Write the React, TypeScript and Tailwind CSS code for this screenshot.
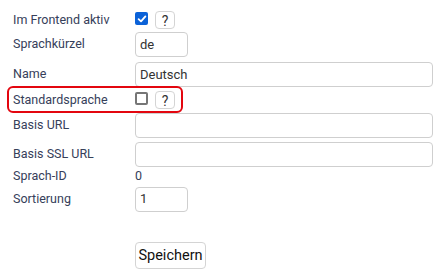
import React from 'react';

const font = { fontFamily: 'Roboto, "Liberation Sans", sans-serif' };

function HelpButton() {
  return (
    <button
      type="button"
      className="ml-[7px] flex h-[18px] w-[20px] items-center justify-center rounded-[4px] border border-[#d4d4d4] bg-white pt-px text-[14px] leading-none text-[#333]"
    >
      ?
    </button>
  );
}

function Checkbox({ checked }: { checked?: boolean }) {
  return checked ? (
    <span className="flex h-[13px] w-[13px] items-center justify-center rounded-[2px] bg-[#0b62d8]">
      <svg width="10" height="10" viewBox="0 0 10 10">
        <path d="M1.6 5.2 L4 7.4 L8.4 2.4" fill="none" stroke="white" strokeWidth="1.8" strokeLinecap="round" strokeLinejoin="round" />
      </svg>
    </span>
  ) : (
    <span className="block h-[13px] w-[13px] rounded-[2px] border-2 border-[#767676] bg-white" />
  );
}

function Input({ value = '', wide }: { value?: string; wide?: boolean }) {
  return (
    <div
      className={`flex h-[25px] items-center rounded-[4px] border border-[#cfcfcf] bg-white px-[4px] text-[13px] text-[#333] ${wide ? 'w-[298px]' : 'w-[53px]'}`}
    >
      {value}
    </div>
  );
}

function Label({ children }: { children: React.ReactNode }) {
  return <div className="w-[122px] shrink-0 text-[12.5px] text-[#36405a]">{children}</div>;
}

export default function App() {
  return (
    <div className="h-[278px] w-[448px] bg-white pl-[13px] pt-[8px]" style={font}>
      <div className="flex h-[24px] items-center">
        <Label>Im Frontend aktiv</Label>
        <div className="flex items-center">
          <span className="-mt-[3px]">
            <Checkbox checked />
          </span>
          <HelpButton />
        </div>
      </div>
      <div className="flex h-[25px] items-center">
        <Label>Sprachkürzel</Label>
        <Input value="de" />
      </div>
      <div className="mt-[5px] flex h-[25px] items-center">
        <Label>Name</Label>
        <Input value="Deutsch" wide />
      </div>
      <div className="relative flex h-[26px] items-center">
        <div className="absolute -left-[6px] -top-[1px] h-[27px] w-[176px] rounded-[6px] border-2 border-[#e3060f]" />
        <Label>Standardsprache</Label>
        <div className="flex items-center">
          <span className="-mt-[3px]">
            <Checkbox />
          </span>
          <HelpButton />
        </div>
      </div>
      <div className="flex h-[25px] items-center">
        <Label>Basis URL</Label>
        <Input wide />
      </div>
      <div className="mt-[4px] flex h-[25px] items-center">
        <Label>Basis SSL URL</Label>
        <Input wide />
      </div>
      <div className="flex h-[19px] items-center">
        <Label>Sprach-ID</Label>
        <div className="text-[12.5px] text-[#36405a]">0</div>
      </div>
      <div className="flex h-[26px] items-center">
        <Label>Sortierung</Label>
        <Input value="1" />
      </div>
      <div className="mt-[30px] flex">
        <div className="w-[122px] shrink-0" />
        <button
          type="button"
          className="h-[27px] w-[71px] rounded-[4px] border border-[#d4d4d4] bg-white text-[14.5px] text-[#111]"
        >
          Speichern
        </button>
      </div>
    </div>
  );
}
